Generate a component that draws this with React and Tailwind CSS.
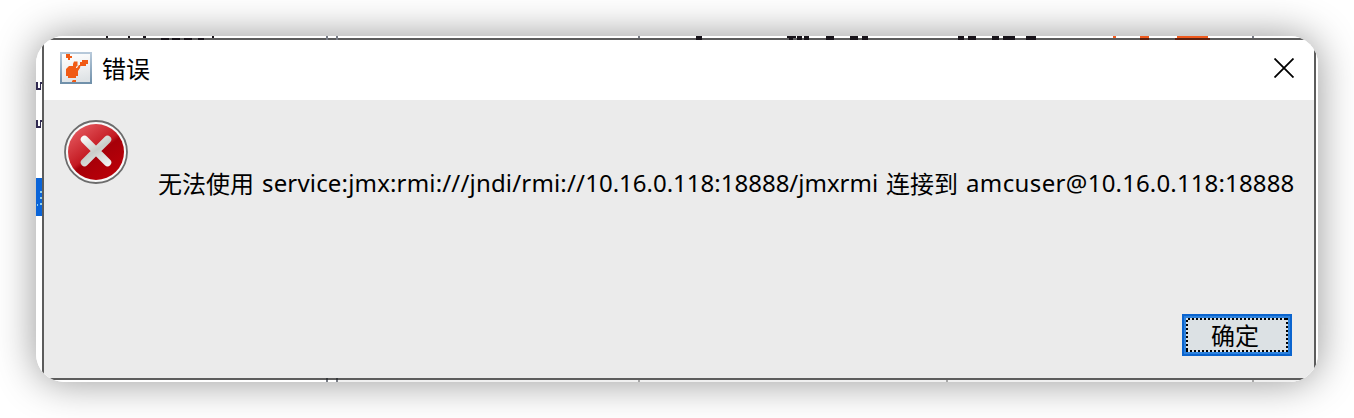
import React from "react";

function AppIcon() {
  return (
    <svg className="h-8 w-8 shrink-0" viewBox="0 0 32 32">
      <defs>
        <linearGradient id="tile" x1="0" y1="0" x2="0.2" y2="1">
          <stop offset="0" stopColor="#ffffff" />
          <stop offset="0.55" stopColor="#f0f1f2" />
          <stop offset="1" stopColor="#dfe3e6" />
        </linearGradient>
        <linearGradient id="tileEdge" x1="0" y1="0" x2="0" y2="1">
          <stop offset="0" stopColor="#b7c9da" />
          <stop offset="1" stopColor="#7090aa" />
        </linearGradient>
      </defs>
      <rect x="1" y="1" width="30" height="30" fill="url(#tile)" stroke="url(#tileEdge)" strokeWidth="2" />
      <g fill="#f05a14">
        <path d="M6 2h4v2h2v2h-2v2H8V6H6z" />
        <path d="M9 14h7v2h2v8h-2v2H8v-2H6v-7z" />
        <path d="M14 9.500h3.500v4L16 15h-3v-3z" />
        <path d="M22 8h6v4h-2v2h-6v-4h2z" />
        <path d="M17 16l2-3h2v-2l-1 5-2 3z" />
        <path d="M13 28h3v2h-4v-1z" />
      </g>
    </svg>
  );
}

function ErrorIcon() {
  return (
    <svg className="h-16 w-16 shrink-0" viewBox="0 0 64 64">
      <defs>
        <linearGradient id="red" x1="0.15" y1="0.1" x2="0.75" y2="0.9">
          <stop offset="0" stopColor="#e2545a" />
          <stop offset="0.5" stopColor="#c41a22" />
          <stop offset="0.58" stopColor="#a60009" />
          <stop offset="1" stopColor="#b80008" />
        </linearGradient>
        <linearGradient id="cross" gradientUnits="userSpaceOnUse" x1="20" y1="14" x2="42" y2="48">
          <stop offset="0" stopColor="#ffffff" />
          <stop offset="0.5" stopColor="#c9cdc9" />
          <stop offset="1" stopColor="#f4f4f4" />
        </linearGradient>
      </defs>
      <circle cx="32" cy="32" r="31" fill="#f8f8f8" stroke="#6c6c6c" strokeWidth="1.8" />
      <circle cx="32" cy="32" r="28" fill="url(#red)" />
      <path
        d="M20.500 19.500l23 23M43.500 19.500l-23 23"
        fill="none"
        stroke="url(#cross)"
        strokeWidth="7.5"
        strokeLinecap="round"
      />
    </svg>
  );
}

function TopRemnants() {
  return (
    <svg className="absolute left-0 top-0 h-[4px] w-[1282px]" viewBox="0 0 1282 4" shapeRendering="crispEdges">
      <g fill="#171319">
        <path d="M70 0h2v2h-2zM92 0h2v2h-2zM107 0h3v2h-3zM176 0h2v2h-2z" />
        <path d="M125 2h8v2h-8zM136 2h8v2h-8zM148 2h8v2h-8zM162 2h6v2h-6z" />
        <path d="M660 0h6v4h-6zM751 0h9v2h-9zM753 2h4v2h-4zM761 0h5v4h-5zM768 0h5v4h-5zM790 0h8v4h-8zM814 0h8v4h-8zM826 0h6v4h-6z" />
        <path d="M922 0h6v4h-6zM932 0h8v4h-8zM956 0h7v4h-7zM967 0h12v4h-12zM990 0h10v4h-10z" />
      </g>
      <path d="M1077 0h3v2h-3zM1104 0h9v2h-9zM1141 0h31v2h-31z" fill="#f05a1e" />
      <path d="M1104 2h9v2h-9zM1139 2h35v2h-35z" fill="#5c2110" />
      <path d="M290 0h2v4h-2zM300 0h2v4h-2zM602 0h2v2h-2zM1216 0h2v2h-2z" fill="#777b84" />
    </svg>
  );
}

function SideRemnants() {
  return (
    <svg className="absolute left-0 top-0 h-[346px] w-[6px]" viewBox="0 0 6 346" shapeRendering="crispEdges">
      <path d="M0 46h2v8H0zM4 46h2v2H4zM4 48h1v6H4zM2 52h2v2H2zM0 84h2v8H0zM4 84h2v2H4zM4 86h1v6H4zM2 90h2v2H2z" fill="#302a50" />
      <path d="M0 142h6v38H0z" fill="#0a64d8" />
      <path d="M4 155h2v2H4zM4 161h2v2H4zM4 167h2v2H4zM1 168h1v2H1z" fill="#8fd0f0" />
    </svg>
  );
}

function BottomRemnants() {
  return (
    <svg className="absolute bottom-0 left-0 h-[4px] w-[1282px]" viewBox="0 0 1282 4" shapeRendering="crispEdges">
      <path d="M302 2h980v2H302z" fill="#f0f0f0" />
      <path d="M290 0h2v2h-2zM300 0h2v2h-2z" fill="#34373a" />
      <path d="M290 2h2v2h-2zM300 2h2v2h-2z" fill="#777b84" />
      <path d="M602 2h2v2h-2zM910 2h2v2h-2zM1216 2h2v2h-2z" fill="#a6a6a6" />
    </svg>
  );
}

export default function App() {
  return (
    <div className="h-[418px] w-[1354px] overflow-hidden bg-white p-9 font-['Noto_Sans','Noto_Sans_CJK_SC',sans-serif] text-2xl text-black">
      <div className="h-[346px] w-[1282px] rounded-[28px] shadow-[0_0_40px_rgba(0,0,0,0.42)]">
        <div className="relative h-full overflow-hidden rounded-[28px] bg-white pb-[2px] pl-[6px] pr-[2px] pt-[2px]">
          <div className="flex h-full flex-col border-2 border-[#5c5c5c] bg-[#ebebeb]">
            <header className="flex h-[60px] shrink-0 items-center bg-white pl-4 pr-5">
              <div className="-mt-1"><AppIcon /></div>
              <h1 className="-mt-1 ml-[10px] font-['Noto_Sans_CJK_SC',sans-serif] leading-8">错误</h1>
              <button aria-label="关闭" className="-mt-1 ml-auto">
                <svg className="h-5 w-5" viewBox="0 0 20 20" stroke="black" strokeWidth="1.8">
                  <path d="M.5.500l19 19M19.500.500l-19 19" />
                </svg>
              </button>
            </header>
            <main className="flex h-[214px] shrink-0 pl-5 pt-5">
              <ErrorIcon />
              <p className="ml-[30px] mt-[47px] flex h-8 whitespace-nowrap leading-8">
                <span className="w-[104px] shrink-0 font-['Noto_Sans_CJK_SC',sans-serif]">无法使用 </span>
                <span className="w-[624px] shrink-0"><span className="tracking-[0.17px]">service:jmx:rmi:///jndi/rmi://</span>10.16.0.118:18888/jmxrmi </span>
                <span className="w-[80px] shrink-0 font-['Noto_Sans_CJK_SC',sans-serif]">连接到 </span>
                <span className="shrink-0"><span className="tracking-[0.38px]">amcuser@</span><span className="tracking-[0.14px]">10.16.0.118:18888</span></span>
              </p>
            </main>
            <footer className="flex justify-end pr-[22px]">
              <button className="h-[42px] w-[110px] border-2 border-[#0a64cf] bg-[#2e82dc] p-[2px]">
                <span className="relative flex h-full items-center justify-center bg-[#dce1e4] pr-1 font-['Noto_Sans_CJK_SC',sans-serif]">
                  <svg className="absolute inset-0 h-[34px] w-[102px]" viewBox="0 0 102 34" fill="none" stroke="black" strokeWidth="2" strokeDasharray="2 2" shapeRendering="crispEdges">
                    <path d="M2 1h100M0 33h102M1 2v32M101 0v34" />
                  </svg>
                  <span>确定</span>
                </span>
              </button>
            </footer>
          </div>
          <TopRemnants />
          <SideRemnants />
          <BottomRemnants />
        </div>
      </div>
    </div>
  );
}
